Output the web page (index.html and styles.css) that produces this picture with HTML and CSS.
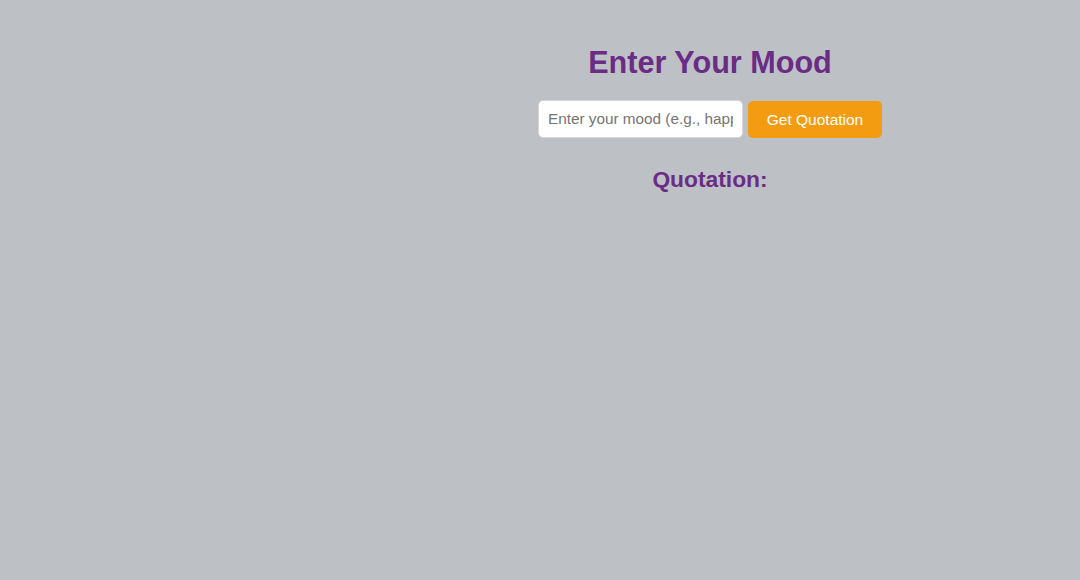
FILE: index.html
```html
<!DOCTYPE html>
<html lang="en">
<head>
<meta charset="utf-8">
<title>Mood Quotation</title>
<link rel="stylesheet" href="styles.css">
</head>
<body>
<div class="layout">
  <aside class="side"></aside>
  <main class="main">
    <h1 class="title">Enter Your Mood</h1>
    <div class="form">
      <input class="mood-input" type="text" placeholder="Enter your mood (e.g., happy, sad)">
      <button class="btn" type="button">Get Quotation</button>
    </div>
    <h2 class="subtitle">Quotation:</h2>
    <p class="quote"></p>
  </main>
</div>
</body>
</html>
```

FILE: styles.css
```css
html, body {
  margin: 0;
  padding: 0;
}
body {
  background: #bdc1c5;
  font-family: "Liberation Sans", Arial, sans-serif;
  font-size: 15.5px;
  height: 580px;
}
.layout {
  display: grid;
  grid-template-columns: 340px 1fr;
}
.main {
  text-align: center;
  padding-top: 45px;
}
.title {
  margin: 0 0 20px;
  font-size: 30.6px;
  line-height: 35px;
  font-weight: bold;
  color: #6a2c85;
}
.form {
  display: flex;
  justify-content: center;
  gap: 5px;
}
.mood-input {
  width: 205px;
  height: 38px;
  box-sizing: border-box;
  padding: 0 9px;
  border: 1px solid #d6d6d6;
  border-radius: 5px;
  background: #fff;
  font-family: "Liberation Sans", Arial, sans-serif;
  font-size: 15.3px;
  color: #333;
  outline: none;
}
.mood-input::placeholder {
  color: #757575;
}
.btn {
  width: 134px;
  height: 37px;
  margin-top: 1px;
  border: 0;
  border-radius: 5px;
  background: #f39c12;
  color: #fff;
  font-family: "Liberation Sans", Arial, sans-serif;
  font-size: 15.5px;
  padding: 0;
  cursor: pointer;
}
.subtitle {
  margin: 28px 0 0;
  font-size: 22.8px;
  line-height: 26px;
  font-weight: bold;
  color: #6a2c85;
}
.quote {
  margin: 0;
}
```
